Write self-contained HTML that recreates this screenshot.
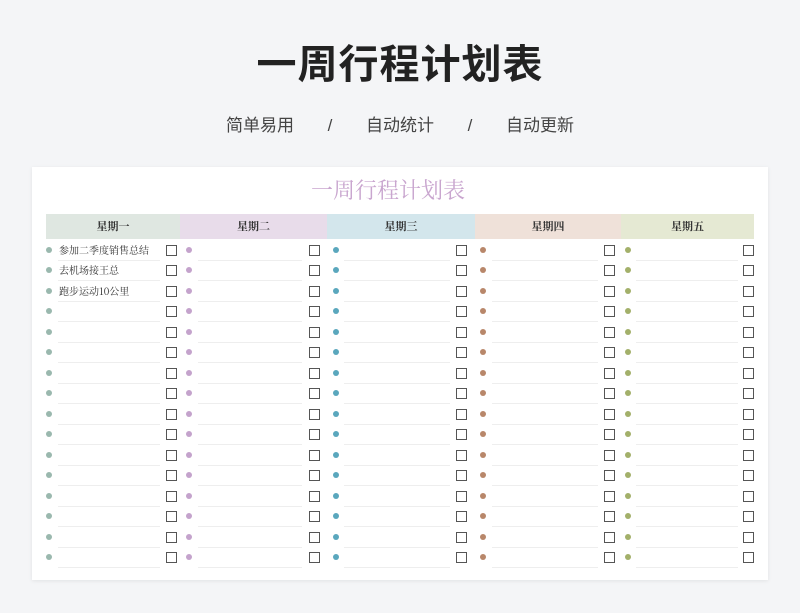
<!DOCTYPE html>
<html><head><meta charset="utf-8"><style>
body{margin:0;width:800px;height:613px;background:#f4f5f7;font-family:"Liberation Sans","Noto Sans CJK SC",sans-serif;position:relative;overflow:hidden}
.t{position:absolute;top:32px;width:800px;text-align:center;font-size:40px;font-weight:bold;color:#222;letter-spacing:1px}
.s{position:absolute;top:111px;width:800px;text-align:center;font-size:17px;color:#444;word-spacing:2px}
.card{position:absolute;left:32px;top:167px;width:736px;height:413px;background:#fff;box-shadow:0 1px 4px rgba(0,0,0,.08)}
.it{position:absolute;top:174px;left:-12px;width:800px;text-align:center;font-size:22px;color:#c9a6cf;font-family:"Noto Serif CJK SC",serif}
.h{position:absolute;top:214px;height:25px;line-height:25px;text-align:center;font-size:11px;font-weight:bold;color:#333;font-family:"Noto Serif CJK SC",serif}
.d{position:absolute;width:6px;height:6px;border-radius:50%}
.b{position:absolute;width:9px;height:9px;border:1px solid #555}
.l{position:absolute;height:1px;background:#eee}
.x{position:absolute;font-size:10px;color:#333;font-family:"Noto Serif CJK SC",serif}
</style></head><body>
<div class="t">一周行程计划表</div>
<div class="s">简单易用 &nbsp; &nbsp; / &nbsp; &nbsp; 自动统计 &nbsp; &nbsp; / &nbsp; &nbsp; 自动更新</div>
<div class="card"></div>
<div class="it">一周行程计划表</div>
<div class="h" style="left:46px;width:134px;background:#dfe7e1">星期一</div>
<div class="h" style="left:180px;width:147px;background:#e8dcea">星期二</div>
<div class="h" style="left:327px;width:148px;background:#d3e6ec">星期三</div>
<div class="h" style="left:475px;width:146px;background:#efe1d9">星期四</div>
<div class="h" style="left:621px;width:133px;background:#e5e9d3">星期五</div>
<div id="g"></div>
<script>
var cols=[[46,166,'#9ab8ae',58,160],[186,309,'#c4a3cc',198,302],[333,456,'#5aa7bd',344,450],[480,604,'#b8876a',492,598],[625,743,'#a3b06a',636,738]];
var tx=['参加二季度销售总结','去机场接王总','跑步运动10公里'];
var h='';
for(var r=0;r<16;r++){var y=250+r*20.47;
cols.forEach(function(c,i){
h+='<div class="d" style="left:'+c[0]+'px;top:'+(y-3)+'px;background:'+c[2]+'"></div>';
h+='<div class="b" style="left:'+c[1]+'px;top:'+(y-5)+'px"></div>';
h+='<div class="l" style="left:'+c[3]+'px;width:'+(c[4]-c[3])+'px;top:'+(y+10)+'px"></div>';
if(i==0&&r<3)h+='<div class="x" style="left:59px;top:'+(y-8)+'px">'+tx[r]+'</div>';
});}
document.getElementById('g').innerHTML=h;
</script>
</body></html>
